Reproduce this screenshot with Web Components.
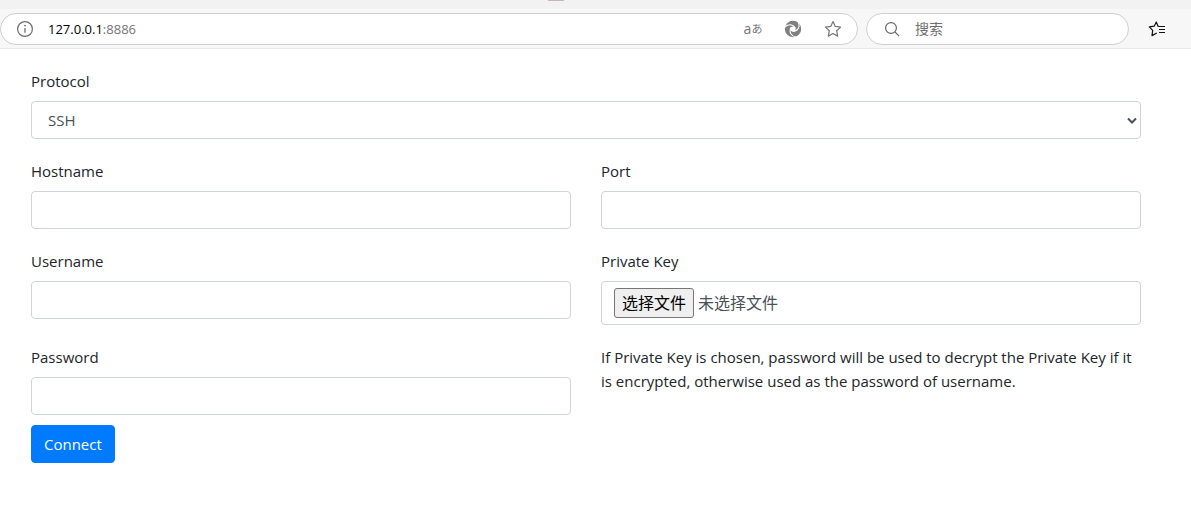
<!DOCTYPE html>
<html lang="zh-CN">
<head>
<meta charset="utf-8">
<title>WebSSH</title>
<style>
  body { margin: 0; background: #fff; color: #212529; font: 15px/24px "Open Sans", "Noto Sans CJK SC", sans-serif; }
</style>
</head>
<body>
<browser-bar></browser-bar>
<connect-form></connect-form>

<template id="bar-tpl">
  <style>
    :host { display: block; background: #f7f7f7; border-bottom: 1px solid #e8e8e8; }
    .tabs { height: 9px; background: #f2f2f2; display: flex; }
    .tab { width: 16px; height: 1px; margin-left: 46%; background: #c8b2c6; }
    .row { display: flex; align-items: center; padding: 4px 24px 3px 0; gap: 8px; }
    address-pill { flex: 1; }
    address-pill.search { flex: 0 0 263px; }
    input { flex: 1; min-width: 0; border: 0; padding: 0; outline: 0; background: none; font: 14px/20px "Open Sans", "Noto Sans CJK SC", sans-serif; color: #6b6b6b; }
    input::placeholder { color: #707070; opacity: 1; }
    .url { flex: 1; font-size: 13px; line-height: 20px; color: #000; margin-left: 14px; }
    .url span { color: #767676; }
    button { border: 0; padding: 0; background: none; display: flex; width: 20px; height: 20px; align-items: center; justify-content: center; color: #757575; }
    .tools { display: flex; gap: 20px; padding-right: 14px; }
    .lang { font: 14px/20px "Open Sans", "Noto Sans CJK JP", sans-serif; }
    .lang small { font-size: 11px; }
    .fav { color: #111; margin-left: 10px; }
    svg { display: block; fill: none; stroke: currentColor; }
    .info { color: #6c6c6c; margin-left: 15px; }
    .search svg { margin-left: 17px; color: #666; }
    .search input { margin-left: 14px; }
  </style>
  <div class="tabs"><span class="tab"></span></div>
  <div class="row">
    <address-pill>
      <svg class="info" width="18" height="18" viewBox="0 0 18 18"><circle cx="9" cy="9" r="7.4" stroke-width="1.2"/><path d="M9 8v4.8" stroke-width="1.3"/><circle cx="9" cy="5.6" r=".9" fill="currentColor" stroke="none"/></svg>
      <div class="url">127.0.0.1<span>:8886</span></div>
      <div class="tools">
        <button class="lang" type="button" aria-label="Translate">a<small>あ</small></button>
        <button type="button" aria-label="Extension">
          <svg width="18" height="18" viewBox="0 0 18 18"><circle cx="9" cy="9" r="8.2" fill="#808080" stroke="none"/><circle cx="9" cy="9" r="2.6" fill="#fff" stroke="none"/><g stroke="#fff" stroke-width="1.1"><path d="M.4 7.6C3.4 3.8 8.6 3.6 11.4 8.2"/><path d="M.4 7.6C3.4 3.8 8.6 3.6 11.4 8.2" transform="rotate(120 9 9)"/><path d="M.4 7.6C3.4 3.8 8.6 3.6 11.4 8.2" transform="rotate(240 9 9)"/></g></svg>
        </button>
        <button type="button" aria-label="Favorite">
          <svg width="18" height="18" viewBox="0 0 18 18" stroke-width="1.2" stroke-linejoin="round"><path d="M9 1.5l2.3 4.9 5.3.7-3.9 3.7 1 5.3L9 13.5l-4.7 2.6 1-5.3L1.4 7.1l5.3-.7z"/></svg>
        </button>
      </div>
    </address-pill>
    <address-pill class="search">
      <svg width="17" height="17" viewBox="0 0 17 17" stroke-width="1.2"><circle cx="7" cy="7" r="5.4"/><path d="M10.9 10.9l4.2 4.2"/></svg>
      <input type="search" placeholder="搜索" aria-label="搜索">
    </address-pill>
    <button class="fav" type="button" aria-label="Favorites list">
      <svg width="18" height="18" viewBox="0 0 18 18" stroke-width="1.2" stroke-linejoin="round"><path d="M11 6.4L10 6.2 8.3 2 6.2 6.2l-4.9.7 3.4 3.5-.7 5.2L8.8 13"/><path d="M11 6.5h6M11 9.5h6M11 12.5h6"/></svg>
    </button>
  </div>
</template>

<template id="pill-tpl">
  <style>
    :host { display: flex; align-items: center; box-sizing: border-box; height: 32px; min-width: 0; border: 1px solid #cfcfcf; border-radius: 16px; background: #fff; overflow: hidden; }
  </style>
  <slot></slot>
</template>

<template id="field-tpl">
  <style>
    :host { display: block; min-width: 0; }
    label { display: block; margin-bottom: 8px; }
    .box { box-sizing: border-box; display: block; width: 100%; height: 38px; padding: 6px 12px; border: 1px solid #ced4da; border-radius: 4px; background: #fff; color: #495057; font: inherit; }
    .box:focus { outline: 0; border-color: #80bdff; }
    .file { position: relative; display: flex; align-items: center; gap: 4px; height: 44px; font-size: 16px; }
    .file input { position: absolute; inset: 0; width: 100%; opacity: 0; }
    .file button { box-sizing: border-box; height: 30px; padding: 0 7px; border: 1px solid #767676; border-radius: 3px; background: #efefef; color: #000; font: inherit; line-height: 24px; }
    .pick { position: relative; display: block; }
    select.box { appearance: none; padding-left: 16px; }
    .pick svg { position: absolute; right: 4px; top: 16px; pointer-events: none; }
  </style>
  <label for="control"></label>
</template>

<template id="form-tpl">
  <style>
    :host { display: block; padding: 20px 50px 20px 31px; }
    form { display: grid; grid-template-columns: 1fr 1fr; gap: 20px 30px; align-items: start; }
    .wide { grid-column: 1 / -1; }
    p { margin: 0; }
    button { margin-top: 10px; height: 38px; padding: 0 12px; border: 1px solid #007bff; border-radius: 4px; background: #007bff; color: #fff; font: inherit; }
  </style>
  <form>
    <form-field class="wide" label="Protocol" kind="select" value="SSH"></form-field>
    <form-field label="Hostname"></form-field>
    <form-field label="Port"></form-field>
    <form-field label="Username"></form-field>
    <form-field label="Private Key" kind="file"></form-field>
    <div>
      <form-field label="Password" kind="password"></form-field>
      <button type="button">Connect</button>
    </div>
    <p>If Private Key is chosen, password will be used to decrypt the Private Key if it is encrypted, otherwise used as the password of username.</p>
  </form>
</template>

<script>
  const stamp = (host, id) => {
    const root = host.attachShadow({ mode: "open" });
    root.append(document.getElementById(id).content.cloneNode(true));
    return root;
  };
  customElements.define("address-pill", class extends HTMLElement {
    constructor() { super(); stamp(this, "pill-tpl"); }
  });
  customElements.define("form-field", class extends HTMLElement {
    connectedCallback() {
      if (this.shadowRoot) return;
      const root = stamp(this, "field-tpl");
      root.querySelector("label").textContent = this.getAttribute("label");
      const kind = this.getAttribute("kind") || "text";
      const holder = document.createElement("div");
      if (kind === "select") {
        holder.className = "pick";
        holder.innerHTML = `<select class="box" id="control"><option>${this.getAttribute("value")}</option></select>
          <svg width="10" height="8" viewBox="0 0 10 8" fill="none" stroke="#495057" stroke-width="2"><path d="M1 1.5l4 4 4-4"/></svg>`;
      } else if (kind === "file") {
        holder.className = "box file";
        holder.innerHTML = `<button type="button" tabindex="-1">选择文件</button><span>未选择文件</span><input type="file" id="control">`;
        const input = holder.querySelector("input");
        input.addEventListener("change", () => {
          holder.querySelector("span").textContent = input.files.length ? input.files[0].name : "未选择文件";
        });
      } else {
        holder.innerHTML = `<input class="box" id="control" type="${kind}">`;
      }
      root.append(holder);
    }
  });
  customElements.define("browser-bar", class extends HTMLElement {
    constructor() { super(); stamp(this, "bar-tpl"); }
  });
  customElements.define("connect-form", class extends HTMLElement {
    constructor() { super(); stamp(this, "form-tpl"); }
  });
</script>
</body>
</html>
